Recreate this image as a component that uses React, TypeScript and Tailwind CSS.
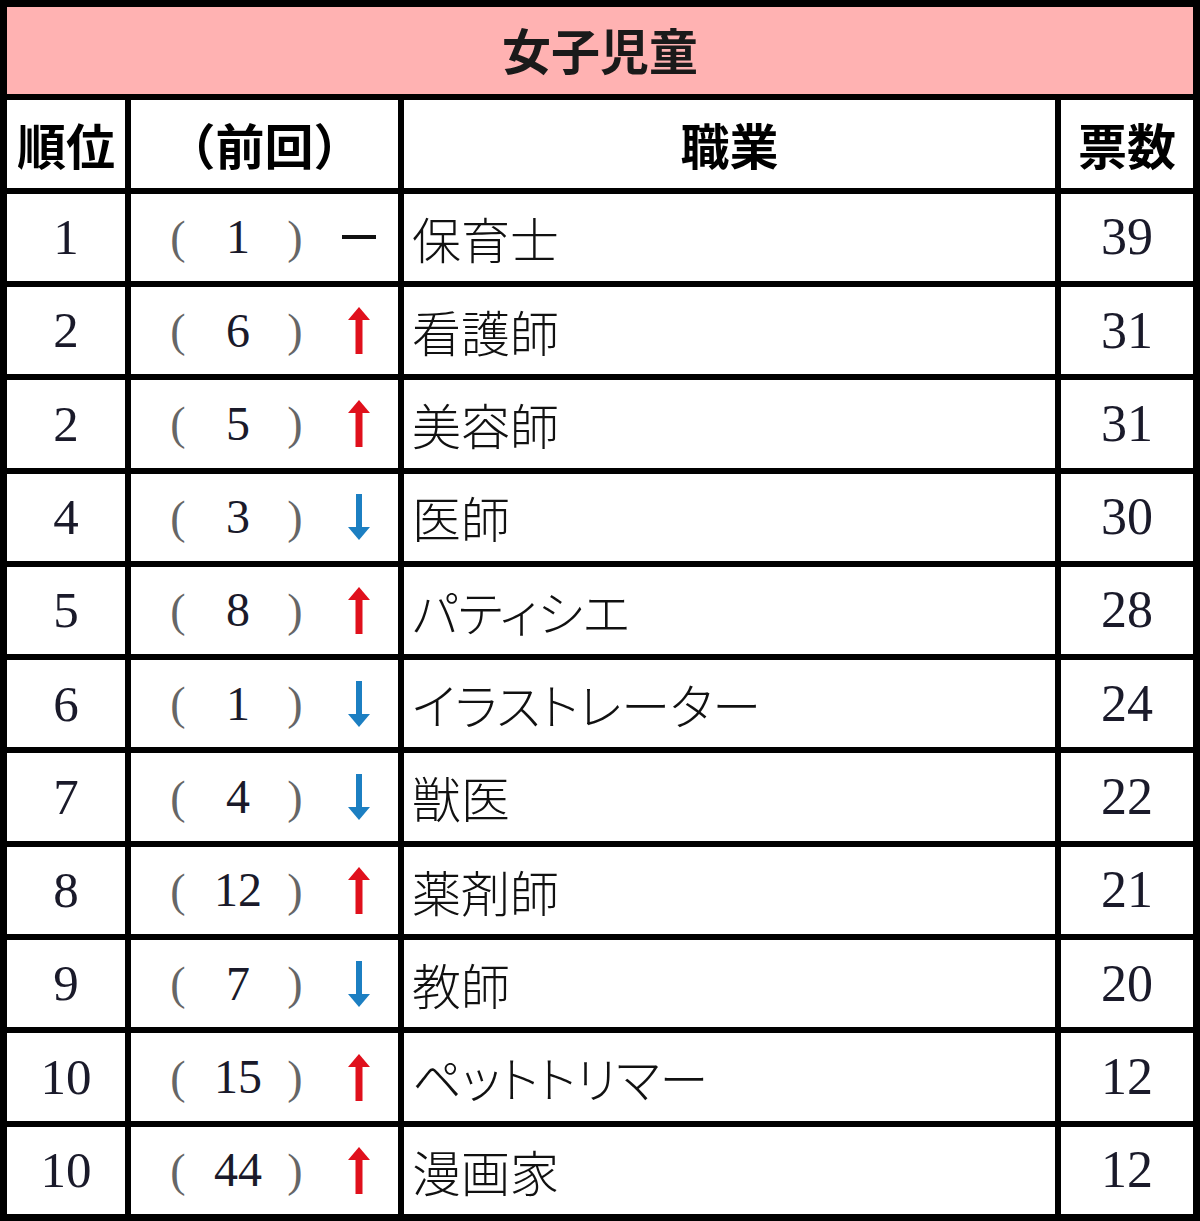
import React from "react";

type Move = "same" | "up" | "down";

interface Row {
  rank: string;
  prev: string;
  move: Move;
  job: string;
  votes: string;
}

const rows: Row[] = [
  { rank: "1", prev: "1", move: "same", job: "保育士", votes: "39" },
  { rank: "2", prev: "6", move: "up", job: "看護師", votes: "31" },
  { rank: "2", prev: "5", move: "up", job: "美容師", votes: "31" },
  { rank: "4", prev: "3", move: "down", job: "医師", votes: "30" },
  { rank: "5", prev: "8", move: "up", job: "パティシエ", votes: "28" },
  { rank: "6", prev: "1", move: "down", job: "イラストレーター", votes: "24" },
  { rank: "7", prev: "4", move: "down", job: "獣医", votes: "22" },
  { rank: "8", prev: "12", move: "up", job: "薬剤師", votes: "21" },
  { rank: "9", prev: "7", move: "down", job: "教師", votes: "20" },
  { rank: "10", prev: "15", move: "up", job: "ペットトリマー", votes: "12" },
  { rank: "10", prev: "44", move: "up", job: "漫画家", votes: "12" },
];

const gothic = "font-['Noto_Sans_CJK_JP','Noto_Sans',sans-serif]";
const serif = "font-['Liberation_Serif','Noto_Sans_CJK_JP',serif]";

const MoveMark: React.FC<{ move: Move }> = ({ move }) => {
  if (move === "same") {
    return <div className="h-[4px] w-[34px] bg-[#111]" />;
  }
  if (move === "up") {
    return (
      <svg width="22" height="47" viewBox="0 0 22 47">
        <polygon points="11,0 22,13 0,13" fill="#e0101c" />
        <rect x="7.5" y="11" width="7" height="36" fill="#e0101c" />
      </svg>
    );
  }
  return (
    <svg width="22" height="46" viewBox="0 0 22 46">
      <rect x="8" y="0" width="6" height="35" fill="#1c7fc2" />
      <polygon points="0,33 22,33 11,46" fill="#1c7fc2" />
    </svg>
  );
};

export default function App() {
  const head = `bg-white flex items-center justify-center text-[49px] font-bold text-black ${gothic}`;
  return (
    <div className="w-[1200px] h-[1221px] bg-black p-[7px] grid grid-cols-[118px_267px_651px_132px] grid-rows-[repeat(13,1fr)] gap-[6px]">
      {/* Title */}
      <div className={`col-span-4 bg-[#ffb2b2] flex items-center justify-center pb-[4px] text-[49px] font-bold text-[#1a1a1a] ${gothic}`}>
        女子児童
      </div>

      {/* Header */}
      <div className={head}>順位</div>
      <div className={head}>（前回）</div>
      <div className={head}>職業</div>
      <div className={head}>票数</div>

      {rows.map((r, i) => (
        <React.Fragment key={i}>
          <div className={`bg-white flex items-center justify-center text-[51px] text-[#1a1a2a] ${serif}`}>
            {r.rank}
          </div>
          <div className={`bg-white flex items-center pl-[23px] ${serif}`}>
            <span className="w-[48px] text-center text-[46px] text-[#666]">(</span>
            <span className="w-[72px] text-center text-[48px] text-[#1a1a2a]">{r.prev}</span>
            <span className="w-[42px] text-center text-[46px] text-[#666]">)</span>
            <span className="ml-[13px] w-[60px] flex items-center justify-center">
              <MoveMark move={r.move} />
            </span>
          </div>
          <div className={`bg-white flex items-center pl-[8px] text-[49px] font-light text-[#111] [font-feature-settings:'palt'] ${gothic}`}>
            {r.job}
          </div>
          <div className={`bg-white flex items-center justify-center text-[52px] text-[#1a1a2a] ${serif}`}>
            {r.votes}
          </div>
        </React.Fragment>
      ))}
    </div>
  );
}
